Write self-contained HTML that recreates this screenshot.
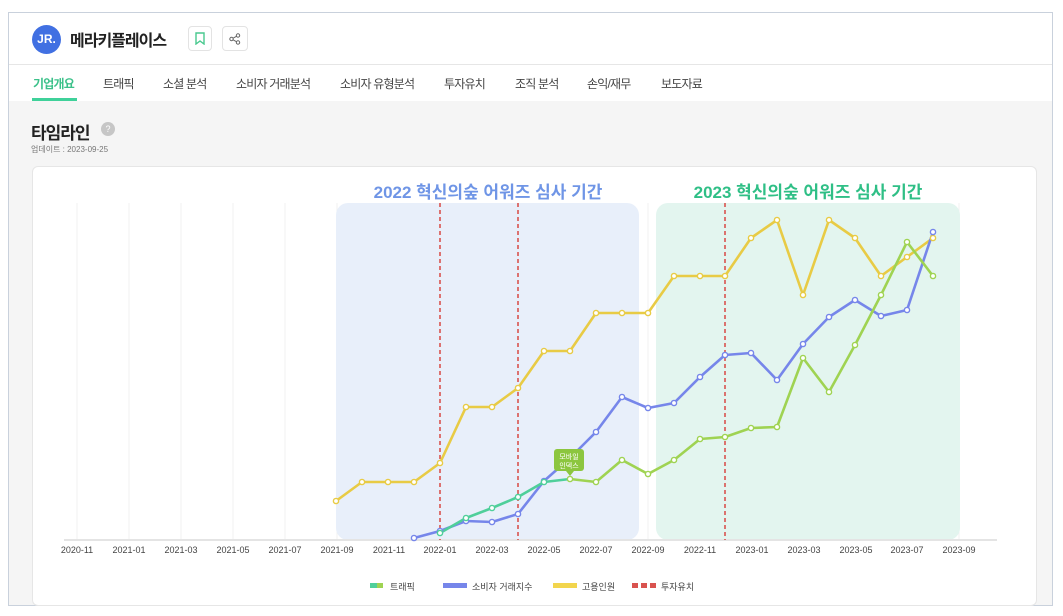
<!DOCTYPE html>
<html><head><meta charset="utf-8"><style>
body{margin:0;width:1063px;height:616px;background:#fff;font-family:"Liberation Sans","Noto Sans CJK KR",sans-serif;position:relative;overflow:hidden}
.frame{position:absolute;left:8px;top:12px;width:1045px;height:594px;border:1px solid #c9d1dc;background:#f5f5f5;box-sizing:border-box}
.hdr{position:absolute;left:9px;top:13px;width:1043px;height:88px;background:#fff}
.t{position:absolute;white-space:nowrap}
</style></head><body>
<div class="frame"></div>
<div class="hdr"></div>
<div style="position:absolute;left:9px;top:64px;width:1043px;height:1px;background:#e6e6e6"></div>
<div style="position:absolute;left:32px;top:25px;width:29px;height:29px;border-radius:50%;background:#4170e2;color:#fff;font-size:12px;font-weight:bold;line-height:29px;text-align:center">JR.</div>
<div class="t" style="left:70px;top:27px;font-size:16px;font-weight:bold;color:#222;letter-spacing:-1px">메라키플레이스</div>
<div style="position:absolute;left:188px;top:26px;width:24px;height:25px;border:1px solid #e3e3e3;border-radius:4px;box-sizing:border-box"></div>
<svg style="position:absolute;left:195px;top:32px" width="10" height="13"><path d="M1 1H9V12L5 9L1 12Z" fill="none" stroke="#49c98f" stroke-width="1.4"/></svg>
<div style="position:absolute;left:222px;top:26px;width:26px;height:25px;border:1px solid #e3e3e3;border-radius:4px;box-sizing:border-box"></div>
<svg style="position:absolute;left:229px;top:33px" width="12" height="12"><circle cx="9" cy="2.5" r="1.7" fill="none" stroke="#666"/><circle cx="2.5" cy="6" r="1.7" fill="none" stroke="#666"/><circle cx="9" cy="9.5" r="1.7" fill="none" stroke="#666"/><path d="M4 5.2L7.5 3.3M4 6.8L7.5 8.7" stroke="#666"/></svg>
<div style="font-size:12px;color:#444;letter-spacing:-0.8px">
<div class="t" style="left:33px;top:75px;color:#3cc18a;font-weight:bold">기업개요</div>
<div class="t" style="left:103px;top:75px">트래픽</div>
<div class="t" style="left:163px;top:75px">소셜 분석</div>
<div class="t" style="left:236px;top:75px">소비자 거래분석</div>
<div class="t" style="left:340px;top:75px">소비자 유형분석</div>
<div class="t" style="left:444px;top:75px">투자유치</div>
<div class="t" style="left:515px;top:75px">조직 분석</div>
<div class="t" style="left:587px;top:75px">손익/재무</div>
<div class="t" style="left:661px;top:75px">보도자료</div>
</div>
<div style="position:absolute;left:32px;top:98px;width:45px;height:3px;background:#3fd19a"></div>
<div class="t" style="left:31px;top:119px;font-size:17px;font-weight:bold;color:#222;letter-spacing:-1px">타임라인</div>
<div style="position:absolute;left:101px;top:122px;width:14px;height:14px;border-radius:50%;background:#c6c6c6;color:#fff;font-size:9px;text-align:center;line-height:14px">?</div>
<div class="t" style="left:31px;top:144px;font-size:8px;color:#777">업데이트 : 2023-09-25</div>
<div style="position:absolute;left:32px;top:166px;width:1005px;height:440px;background:#fff;border:1px solid #e6e6e6;border-radius:6px;box-sizing:border-box"></div>
<svg style="position:absolute;left:0;top:0" width="1063" height="616" font-family="Liberation Sans,Noto Sans CJK KR,sans-serif">
<g stroke="#f0f0f0" stroke-width="1">
<path d="M77 203V540M129 203V540M181 203V540M233 203V540M285 203V540M337 203V540M389 203V540M440 203V540M492 203V540M544 203V540M596 203V540M648 203V540M700 203V540M752 203V540M804 203V540M856 203V540M907 203V540M959 203V540"/>
</g>
<rect x="336" y="203" width="303" height="337" rx="12" fill="#e8effa"/>
<rect x="656" y="203" width="304" height="337" rx="12" fill="#e3f5ef"/>
<line x1="64" y1="540" x2="997" y2="540" stroke="#e4e4e4" stroke-width="2"/>
<text x="488" y="198" fill="#6f95e6" font-size="17" text-anchor="middle" font-weight="bold">2022 혁신의숲 어워즈 심사 기간</text>
<text x="808" y="198" fill="#2fbf86" font-size="17" text-anchor="middle" font-weight="bold">2023 혁신의숲 어워즈 심사 기간</text>
<g stroke="#d9534f" stroke-width="1.6" stroke-dasharray="4,3"><path d="M440 203V540M518 203V540M725 203V540"/></g>
<g fill="none" stroke-width="2.6" stroke-linejoin="round">
<polyline stroke="#e8cb45" points="336,501 362,482 388,482 414,482 440,463 466,407 492,407 518,388 544,351 570,351 596,313 622,313 648,313 674,276 700,276 725,276 751,238 777,220 803,295 829,220 855,238 881,276 907,257 933,238"/>
<polyline stroke="#7686ea" points="414,538 440,531 466,521 492,522 518,514 544,481 570,458 596,432 622,397 648,408 674,403 700,377 725,355 751,353 777,380 803,344 829,317 855,300 881,316 907,310 933,232"/>
<polyline stroke="#4fcf9a" points="440,533 466,518 492,508 518,497 544,482 570,479"/>
<polyline stroke="#9fd352" points="570,479 596,482 622,460 648,474 674,460 700,439 725,437 751,428 777,427 803,358 829,392 855,345 881,295 907,242 933,276"/>
</g>
<g fill="#fff" stroke-width="1.4">
<g stroke="#e8cb45"><circle cx="336" cy="501" r="2.6"/><circle cx="362" cy="482" r="2.6"/><circle cx="388" cy="482" r="2.6"/><circle cx="414" cy="482" r="2.6"/><circle cx="440" cy="463" r="2.6"/><circle cx="466" cy="407" r="2.6"/><circle cx="492" cy="407" r="2.6"/><circle cx="518" cy="388" r="2.6"/><circle cx="544" cy="351" r="2.6"/><circle cx="570" cy="351" r="2.6"/><circle cx="596" cy="313" r="2.6"/><circle cx="622" cy="313" r="2.6"/><circle cx="648" cy="313" r="2.6"/><circle cx="674" cy="276" r="2.6"/><circle cx="700" cy="276" r="2.6"/><circle cx="725" cy="276" r="2.6"/><circle cx="751" cy="238" r="2.6"/><circle cx="777" cy="220" r="2.6"/><circle cx="803" cy="295" r="2.6"/><circle cx="829" cy="220" r="2.6"/><circle cx="855" cy="238" r="2.6"/><circle cx="881" cy="276" r="2.6"/><circle cx="907" cy="257" r="2.6"/><circle cx="933" cy="238" r="2.6"/></g>
<g stroke="#7686ea"><circle cx="414" cy="538" r="2.6"/><circle cx="440" cy="531" r="2.6"/><circle cx="466" cy="521" r="2.6"/><circle cx="492" cy="522" r="2.6"/><circle cx="518" cy="514" r="2.6"/><circle cx="544" cy="481" r="2.6"/><circle cx="596" cy="432" r="2.6"/><circle cx="622" cy="397" r="2.6"/><circle cx="648" cy="408" r="2.6"/><circle cx="674" cy="403" r="2.6"/><circle cx="700" cy="377" r="2.6"/><circle cx="725" cy="355" r="2.6"/><circle cx="751" cy="353" r="2.6"/><circle cx="777" cy="380" r="2.6"/><circle cx="803" cy="344" r="2.6"/><circle cx="829" cy="317" r="2.6"/><circle cx="855" cy="300" r="2.6"/><circle cx="881" cy="316" r="2.6"/><circle cx="907" cy="310" r="2.6"/><circle cx="933" cy="232" r="2.6"/></g>
<g stroke="#4fcf9a"><circle cx="440" cy="533" r="2.6"/><circle cx="466" cy="518" r="2.6"/><circle cx="492" cy="508" r="2.6"/><circle cx="518" cy="497" r="2.6"/><circle cx="544" cy="482" r="2.6"/></g>
<g stroke="#9fd352"><circle cx="570" cy="479" r="2.6"/><circle cx="596" cy="482" r="2.6"/><circle cx="622" cy="460" r="2.6"/><circle cx="648" cy="474" r="2.6"/><circle cx="674" cy="460" r="2.6"/><circle cx="700" cy="439" r="2.6"/><circle cx="725" cy="437" r="2.6"/><circle cx="751" cy="428" r="2.6"/><circle cx="777" cy="427" r="2.6"/><circle cx="803" cy="358" r="2.6"/><circle cx="829" cy="392" r="2.6"/><circle cx="855" cy="345" r="2.6"/><circle cx="881" cy="295" r="2.6"/><circle cx="907" cy="242" r="2.6"/><circle cx="933" cy="276" r="2.6"/></g>
</g>
<rect x="554" y="449" width="30" height="22" rx="3" fill="#8cc63f"/>
<path d="M566 471L570 476L574 471Z" fill="#8cc63f"/>
<text x="569" y="459" fill="#fff" font-size="7" text-anchor="middle">모바일</text>
<text x="569" y="468" fill="#fff" font-size="7" text-anchor="middle">인덱스</text>
<g font-size="9" fill="#444" text-anchor="middle">
<text x="77" y="553">2020-11</text><text x="129" y="553">2021-01</text><text x="181" y="553">2021-03</text><text x="233" y="553">2021-05</text><text x="285" y="553">2021-07</text><text x="337" y="553">2021-09</text><text x="389" y="553">2021-11</text><text x="440" y="553">2022-01</text><text x="492" y="553">2022-03</text><text x="544" y="553">2022-05</text><text x="596" y="553">2022-07</text><text x="648" y="553">2022-09</text><text x="700" y="553">2022-11</text><text x="752" y="553">2023-01</text><text x="804" y="553">2023-03</text><text x="856" y="553">2023-05</text><text x="907" y="553">2023-07</text><text x="959" y="553">2023-09</text>
</g>
<rect x="370" y="583" width="12" height="5" fill="#4fcf9a"/><rect x="377" y="583" width="6" height="5" fill="#9fd352"/>
<rect x="443" y="583" width="24" height="5" fill="#7686ea"/>
<rect x="553" y="583" width="24" height="5" fill="#f2d54d"/>
<g fill="#d9534f"><rect x="632" y="583" width="6" height="5"/><rect x="641" y="583" width="6" height="5"/><rect x="650" y="583" width="6" height="5"/></g>
<g font-size="9" fill="#444"><text x="390" y="590">트래픽</text><text x="472" y="590">소비자 거래지수</text><text x="582" y="590">고용인원</text><text x="661" y="590">투자유치</text></g>
</svg>
</body></html>
